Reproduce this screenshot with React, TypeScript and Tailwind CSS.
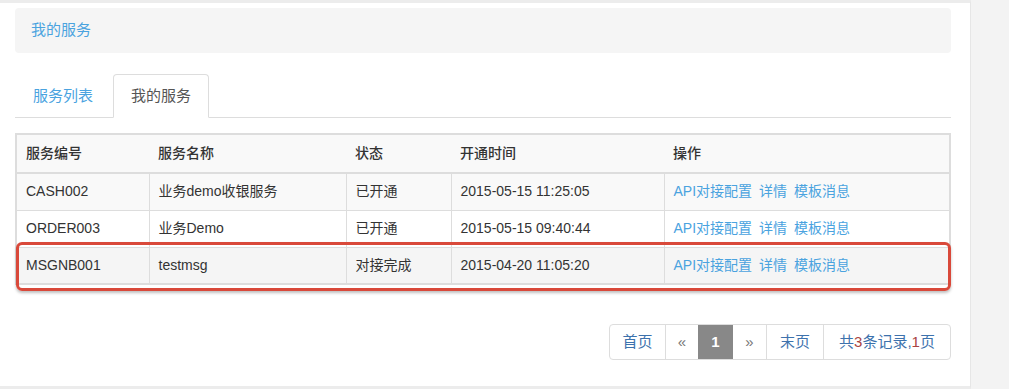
import React from 'react';

interface ServiceRow {
  code: string;
  name: string;
  status: string;
  openedAt: string;
}

const rows: ServiceRow[] = [
  { code: 'CASH002', name: '业务demo收银服务', status: '已开通', openedAt: '2015-05-15 11:25:05' },
  { code: 'ORDER003', name: '业务Demo', status: '已开通', openedAt: '2015-05-15 09:40:44' },
  { code: 'MSGNB001', name: 'testmsg', status: '对接完成', openedAt: '2015-04-20 11:05:20' },
];

const rowBg = ['bg-[#f9f9f9]', 'bg-white', 'bg-[#f5f5f5]'];

const App: React.FC = () => {
  return (
    <div
      className="flex h-[389px] w-full bg-[#f3f3f3] text-[#333]"
      style={{ fontFamily: "'Liberation Sans', 'Noto Sans CJK SC', sans-serif" }}
    >
      <div className="flex w-[971px] flex-col border-y-[3px] border-r border-y-[#ececec] border-r-[#e6e6e6] bg-white pl-[15px] pr-[19px]">
        {/* breadcrumb */}
        <div className="mt-[5px] flex h-[45px] items-center rounded-[4px] bg-[#f5f5f5] px-[16px] text-[15px] text-[#4aa3df]">
          我的服务
        </div>

        {/* tabs */}
        <div className="mt-[21px] flex border-b border-[#ddd]">
          <div className="mr-[2px] -mb-px border border-transparent px-[17px] py-[10px] text-[15px] leading-[22px] text-[#4aa3df]">
            服务列表
          </div>
          <div className="-mb-px rounded-t-[4px] border border-[#ddd] border-b-white bg-white px-[17px] py-[10px] text-[15px] leading-[22px] text-[#555]">
            我的服务
          </div>
        </div>

        {/* table */}
        <div className="relative mt-[15px]">
          <table className="w-[936px] table-fixed border-collapse border-2 border-[#ddd] text-[14px]">
            <colgroup>
              <col className="w-[133px]" />
              <col className="w-[197px]" />
              <col className="w-[105px]" />
              <col className="w-[213px]" />
              <col />
            </colgroup>
            <thead>
              <tr className="h-[39px] border-b-2 border-[#ddd] bg-[#f9f9f9]">
                <th className="px-[9px] text-left font-medium text-[#333]">服务编号</th>
                <th className="px-[9px] text-left font-medium text-[#333]">服务名称</th>
                <th className="px-[9px] text-left font-medium text-[#333]">状态</th>
                <th className="px-[9px] text-left font-medium text-[#333]">开通时间</th>
                <th className="px-[9px] text-left font-medium text-[#333]">操作</th>
              </tr>
            </thead>
            <tbody>
              {rows.map((r, i) => (
                <tr key={r.code} className={`h-[37px] border-t border-[#ddd] ${rowBg[i]}`}>
                  <td className="border-r border-[#ddd] px-[9px]">{r.code}</td>
                  <td className="border-r border-[#ddd] px-[9px]">{r.name}</td>
                  <td className="border-r border-[#ddd] px-[9px]">{r.status}</td>
                  <td className="border-r border-[#ddd] px-[9px]">{r.openedAt}</td>
                  <td className="px-[9px] text-[#4aa3df]">
                    <span className="mr-[7px]">API对接配置</span>
                    <span className="mr-[7px]">详情</span>
                    <span>模板消息</span>
                  </td>
                </tr>
              ))}
            </tbody>
          </table>
          {/* highlight annotation */}
          <div className="pointer-events-none absolute left-[1px] top-[109px] h-[49px] w-[935px] rounded-[6px] border-[3px] border-[#d9493a] shadow-[0_2px_3px_rgba(0,0,0,0.25)]" />
        </div>

        {/* pagination */}
        <div className="mt-[39px] flex justify-end">
          <div className="flex h-[36px] overflow-hidden rounded-[4px] border border-[#ddd] text-[15px] text-[#3d72ad]">
            <span className="flex w-[55px] items-center justify-center">首页</span>
            <span className="flex w-[33px] items-center justify-center border-l border-[#ddd] text-[#777]">«</span>
            <span className="flex w-[35px] items-center justify-center bg-[#888] font-bold text-white">1</span>
            <span className="flex w-[33px] items-center justify-center text-[#777]">»</span>
            <span className="flex w-[57px] items-center justify-center border-l border-[#ddd]">末页</span>
            <span className="flex w-[127px] items-center justify-center border-l border-[#ddd]">
              共<span className="text-[#a94442]">3</span>条记录,<span className="text-[#a94442]">1</span>页
            </span>
          </div>
        </div>
      </div>
    </div>
  );
};

export default App;
